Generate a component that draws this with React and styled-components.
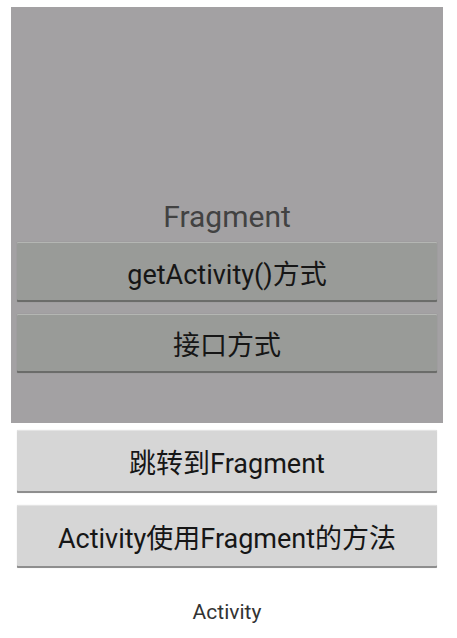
import styled, { createGlobalStyle } from "styled-components";

const GlobalStyle = createGlobalStyle`
  html, body {
    margin: 0;
    padding: 0;
    background: #ffffff;
  }
  body {
    font-family: Roboto, "Noto Sans CJK SC", sans-serif;
  }
`;

const Screen = styled.div`
  width: 457px;
  height: 638px;
  box-sizing: border-box;
  padding: 7px 14px 0 11px;
  display: flex;
  flex-direction: column;
  background: #ffffff;
`;

const FragmentPanel = styled.section`
  height: 416px;
  box-sizing: border-box;
  padding: 193px 6px 0;
  background: #a3a1a3;
  display: flex;
  flex-direction: column;
`;

const Title = styled.div`
  height: 34px;
  line-height: 34px;
  text-align: center;
  font-size: ${({ size }) => size}px;
  color: ${({ color }) => color};
`;

const ButtonStack = styled.div`
  display: flex;
  flex-direction: column;
  gap: 12px;
  margin-top: ${({ offset }) => offset}px;
  padding: ${({ inset }) => (inset ? "0 6px" : "0")};
`;

const HoloButton = styled.button`
  height: ${({ h }) => h}px;
  width: 100%;
  box-sizing: border-box;
  margin: 0;
  padding: 0;
  border: none;
  border-radius: 1px;
  background: ${({ tone }) => (tone === "dark" ? "#999b98" : "#d6d6d6")};
  box-shadow: ${({ tone }) =>
    tone === "dark"
      ? "inset 0 1px 0 #b4b6b3, inset 0 -2px 0 #6b6c6a, 0 0 1px rgba(0,0,0,0.25)"
      : "inset 0 1px 0 #e4e4e4, inset 0 -2px 0 #8e8e8e, 0 0 1px rgba(0,0,0,0.2)"};
  font-family: Roboto, "Noto Sans CJK SC", sans-serif;
  font-size: 27px;
  color: #161616;
  display: flex;
  align-items: center;
  justify-content: center;
`;

const Caption = styled.div`
  margin-top: 32px;
  height: 24px;
  line-height: 24px;
  text-align: center;
  font-size: 21px;
  color: #333333;
`;

export default function App() {
  return (
    <>
      <GlobalStyle />
      <Screen>
        <FragmentPanel>
          <Title size={30} color="#424242">
            Fragment
          </Title>
          <ButtonStack offset={8}>
            <HoloButton tone="dark" h={60}>
              getActivity()方式
            </HoloButton>
            <HoloButton tone="dark" h={59}>
              接口方式
            </HoloButton>
          </ButtonStack>
        </FragmentPanel>
        <ButtonStack offset={7} inset>
          <HoloButton tone="light" h={63}>
            跳转到Fragment
          </HoloButton>
          <HoloButton tone="light" h={63}>
            Activity使用Fragment的方法
          </HoloButton>
        </ButtonStack>
        <Caption>Activity</Caption>
      </Screen>
    </>
  );
}
